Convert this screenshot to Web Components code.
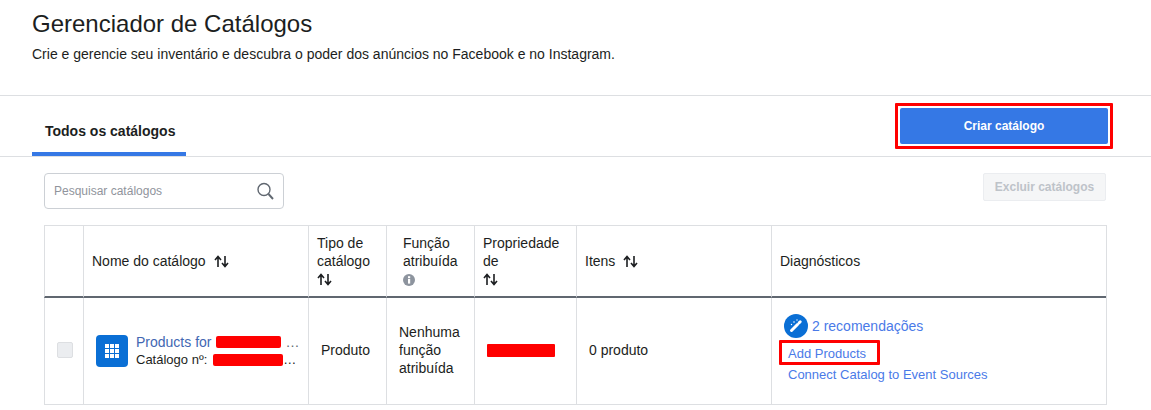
<!DOCTYPE html>
<html lang="pt">
<head>
<meta charset="utf-8">
<title>Gerenciador de Catálogos</title>
<style>
  html, body { margin: 0; background: #fff; }
  body { font-family: "Liberation Sans", Arial, sans-serif; color: #1c1e21; width: 1151px; height: 410px; overflow: hidden; }
</style>
</head>
<body>
<catalog-manager></catalog-manager>
<script>
(function () {
    const SORT = `<svg width="15" height="13" viewBox="0 0 15 13" fill="none" stroke="#1c1e21" stroke-width="1.6"><path d="M4 12V2M1 5l3-3.6L7 5"/><path d="M11 1v10M8 8l3 3.6L14 8"/></svg>`;

    class PageHeader extends HTMLElement {
        constructor() {
            super();
            this.attachShadow({ mode: "open" }).innerHTML = `
              <style>
                :host { display: block; padding-left: 32px; box-sizing: border-box; border-bottom: 1px solid #dddfe2; height: 96px; }
                h1 { margin: 0; padding-top: 10px; font-size: 24px; line-height: 28px; font-weight: 400; color: #1c1e21; }
                p { margin: 7px 0 0; font-size: 14px; line-height: 18px; color: #1c1e21; }
              </style>
              <h1><slot name="title"></slot></h1>
              <p><slot name="subtitle"></slot></p>`;
        }
    }

    class TabBar extends HTMLElement {
        constructor() {
            super();
            this.attachShadow({ mode: "open" }).innerHTML = `
              <style>
                :host { display: flex; justify-content: space-between; height: 61px; box-sizing: border-box; padding: 0 38px 0 32px; border-bottom: 1px solid #dddfe2; }
                .tab { width: 154px; height: 60px; box-sizing: border-box; border-bottom: 4px solid #3578e5; padding: 27px 0 0 13px; font-size: 14px; line-height: 16px; font-weight: 700; color: #1c1e21; }
                .mark { align-self: flex-start; margin-top: 7px; border: 3px solid #f00; border-radius: 1px; padding: 2px; }
              </style>
              <div class="tab"><slot name="tab"></slot></div>
              <div class="mark"><slot name="action"></slot></div>`;
        }
    }

    class FbButton extends HTMLElement {
        constructor() {
            super();
            this.attachShadow({ mode: "open" }).innerHTML = `
              <style>
                :host { display: flex; align-items: center; justify-content: center; box-sizing: border-box; font-size: 12px; font-weight: 700; border-radius: 2px; }
                :host([primary]) { width: 208px; height: 36px; background: #3578e5; color: #fff; }
                :host([disabled]) { width: 123px; height: 28px; background: #f5f6f7; color: #bec3c9; border: 1px solid #ebedf0; }
              </style>
              <slot></slot>`;
        }
    }

    class SearchBox extends HTMLElement {
        constructor() {
            super();
            this.attachShadow({ mode: "open" }).innerHTML = `
              <style>
                :host { display: flex; align-items: center; justify-content: space-between; box-sizing: border-box; width: 240px; height: 36px; padding: 0 9px 0 9px; border: 1px solid #ccd0d5; border-radius: 4px; font-size: 12px; color: #90949c; }
                svg { display: block; }
              </style>
              <slot></slot>
              <svg width="18" height="18" viewBox="0 0 18 18" fill="none" stroke="#606770"><circle cx="8" cy="7.5" r="6" stroke-width="1.4"/><path d="M12.5 12l4.5 5" stroke-width="1.9"/></svg>`;
        }
    }

    class CatalogToolbar extends HTMLElement {
        constructor() {
            super();
            this.attachShadow({ mode: "open" }).innerHTML = `
              <style>
                :host { display: flex; justify-content: space-between; align-items: flex-start; height: 68px; box-sizing: border-box; padding: 16px 45px 0 44px; }
              </style>
              <slot></slot>`;
        }
    }

    class SortIcon extends HTMLElement {
        constructor() {
            super();
            this.attachShadow({ mode: "open" }).innerHTML = `
              <style>:host { display: inline-block; vertical-align: -2px; line-height: 0; }</style>${SORT}`;
        }
    }

    class InfoIcon extends HTMLElement {
        constructor() {
            super();
            this.attachShadow({ mode: "open" }).innerHTML = `
              <style>:host { display: block; line-height: 0; }</style>
              <svg width="12" height="12" viewBox="0 0 12 12"><circle cx="6" cy="6" r="6" fill="#8d949e"/><rect x="5" y="5" width="2.2" height="4.6" fill="#fff"/><rect x="5" y="2.2" width="2.2" height="2" fill="#fff"/></svg>`;
        }
    }

    class CatalogName extends HTMLElement {
        constructor() {
            super();
            this.attachShadow({ mode: "open" }).innerHTML = `
              <style>
                :host { display: flex; align-items: center; gap: 8px; padding-left: 12px; }
                .icon { width: 32px; height: 32px; border-radius: 4px; background: #0a6fd5; display: flex; align-items: center; justify-content: center; flex: none; }
                .text { flex: 1; min-width: 0; }
                .name { display: flex; align-items: center; font-size: 14px; line-height: 18px; color: #4267b2; white-space: nowrap; }
                .id { display: flex; align-items: center; font-size: 13px; line-height: 18px; color: #1c1e21; white-space: nowrap; }
                .red { display: block; background: #f00; border-radius: 2px; }
                .name .red { width: 65px; height: 12px; margin: 0 4px 0 5px; }
                .id .red { width: 70px; height: 12px; margin-left: 6px; }
                .more { color: #606770; }
              </style>
              <div class="icon">
                <svg width="14" height="14" viewBox="0 0 14 14" fill="#fff"><path d="M0 0h4v4H0zM5 0h4v4H5zM10 0h4v4h-4zM0 5h4v4H0zM5 5h4v4H5zM10 5h4v4h-4zM0 10h4v4H0zM5 10h4v4H5zM10 10h4v4h-4z"/></svg>
              </div>
              <div class="text">
                <div class="name">Products for <i class="red"></i><span class="more">…</span></div>
                <div class="id">Catálogo nº: <i class="red"></i><span>…</span></div>
              </div>`;
        }
    }

    class Diagnostics extends HTMLElement {
        constructor() {
            super();
            this.attachShadow({ mode: "open" }).innerHTML = `
              <style>
                :host { display: block; padding: 16px 0 0 7px; }
                .rec { display: flex; align-items: center; gap: 4px; height: 24px; margin-left: 5px; font-size: 14px; color: #4a7ae8; }
                .badge { width: 24px; height: 24px; border-radius: 50%; background: #0a6fd5; display: flex; align-items: center; justify-content: center; }
                .mark { width: 89px; height: 18px; margin-top: 2px; padding: 1px 0 0 6px; border: 3px solid #f00; border-radius: 1px; font-size: 13px; line-height: 19px; color: #4a7ae8; }
                .link { margin: 1px 0 0 9px; font-size: 13px; line-height: 18px; color: #4a7ae8; white-space: nowrap; }
              </style>
              <div class="rec">
                <span class="badge">
                  <svg width="16" height="16" viewBox="0 0 16 16" fill="none"><path d="M3.5 12.5l6-6" stroke="#fff" stroke-width="3" stroke-linecap="round"/><path d="M11.2 4.8l1-1" stroke="#fff" stroke-width="3" stroke-linecap="round"/><circle cx="6" cy="4" r=".8" fill="#fff"/><circle cx="9" cy="2" r=".7" fill="#fff"/><circle cx="3.5" cy="6.5" r=".7" fill="#fff"/></svg>
                </span>
                <span>2 recomendações</span>
              </div>
              <div class="mark">Add Products</div>
              <div class="link">Connect Catalog to Event Sources</div>`;
        }
    }

    class CatalogTable extends HTMLElement {
        constructor() {
            super();
            this.attachShadow({ mode: "open" }).innerHTML = `
              <style>
                :host { display: grid; width: 1063px; margin-left: 44px; box-sizing: border-box;
                  grid-template-columns: 39px 225px 78px 88px 102px 195px 335px;
                  grid-template-rows: 72px 106px;
                  border-top: 1px solid #dddfe2; border-bottom: 1px solid #dddfe2; border-right: 1px solid #dddfe2;
                  font-size: 14px; line-height: 18px; color: #1c1e21; }
                .c { border-left: 1px solid #dddfe2; box-sizing: border-box; }
                .h { border-bottom: 2px solid #606770; display: flex; flex-direction: column; justify-content: center; padding: 0 0 0 8px; }
                .b { display: flex; align-items: center; padding: 0 0 2px 8px; }
                .r { display: inline-flex; align-items: center; gap: 8px; }
                .check { width: 14px; height: 14px; border: 1px solid #dddfe2; background: #ebedf0; border-radius: 2px; }
                .block { width: 68px; height: 13px; background: #f00; border-radius: 1px; }
              </style>
              <div class="c h"></div>
              <div class="c h"><span class="r">Nome do catálogo <sort-icon></sort-icon></span></div>
              <div class="c h">Tipo de<br>catálogo<br><div><sort-icon></sort-icon></div></div>
              <div class="c h" style="padding:0 0 2px 16px">Função<br>atribuída<div style="padding-top:4px"><info-icon></info-icon></div></div>
              <div class="c h">Propriedade<br>de<div><sort-icon></sort-icon></div></div>
              <div class="c h"><span class="r">Itens <sort-icon></sort-icon></span></div>
              <div class="c h">Diagnósticos</div>

              <div class="c b" style="padding-left:12px"><div class="check"></div></div>
              <div class="c b" style="padding:0"><catalog-name style="width:100%"></catalog-name></div>
              <div class="c b" style="padding-left:12px">Produto</div>
              <div class="c b" style="padding-left:12px">Nenhuma<br>função<br>atribuída</div>
              <div class="c b" style="padding-left:12px"><div class="block"></div></div>
              <div class="c b" style="padding-left:12px">0 produto</div>
              <div class="c" style="padding:0"><diag-cell></diag-cell></div>`;
        }
    }

    class CatalogManager extends HTMLElement {
        constructor() {
            super();
            this.attachShadow({ mode: "open" }).innerHTML = `
              <style>:host { display: block; }</style>
              <page-header>
                <span slot="title">Gerenciador de Catálogos</span>
                <span slot="subtitle">Crie e gerencie seu inventário e descubra o poder dos anúncios no Facebook e no Instagram.</span>
              </page-header>
              <tab-bar>
                <span slot="tab">Todos os catálogos</span>
                <fb-button slot="action" primary>Criar catálogo</fb-button>
              </tab-bar>
              <catalog-toolbar>
                <search-box>Pesquisar catálogos</search-box>
                <fb-button disabled>Excluir catálogos</fb-button>
              </catalog-toolbar>
              <catalog-table></catalog-table>`;
        }
    }

    customElements.define("page-header", PageHeader);
    customElements.define("tab-bar", TabBar);
    customElements.define("fb-button", FbButton);
    customElements.define("search-box", SearchBox);
    customElements.define("catalog-toolbar", CatalogToolbar);
    customElements.define("sort-icon", SortIcon);
    customElements.define("info-icon", InfoIcon);
    customElements.define("catalog-name", CatalogName);
    customElements.define("diag-cell", Diagnostics);
    customElements.define("catalog-table", CatalogTable);
    customElements.define("catalog-manager", CatalogManager);
})();
</script>
</body>
</html>
